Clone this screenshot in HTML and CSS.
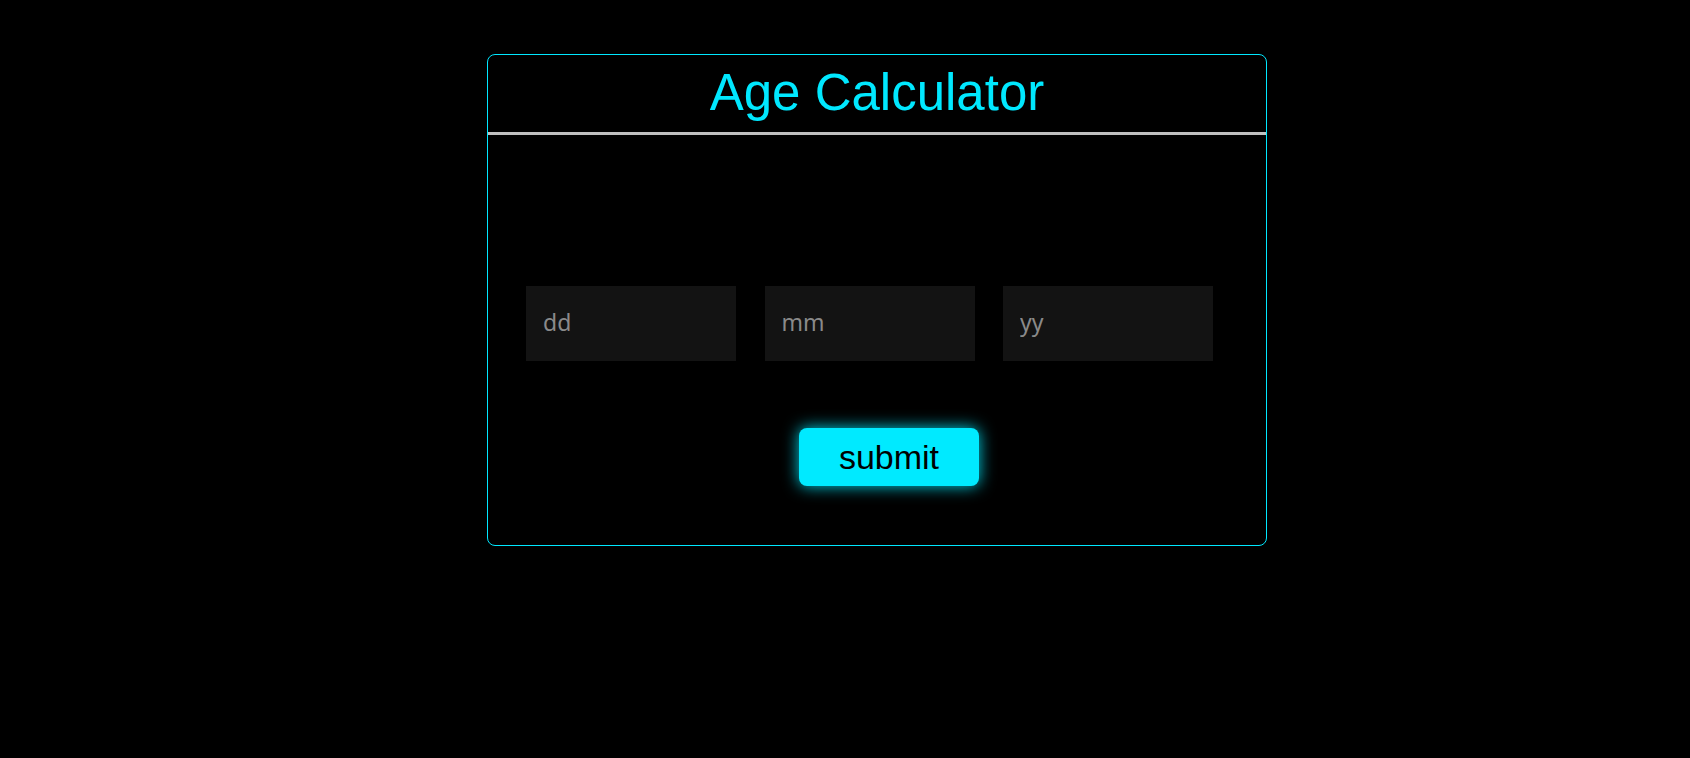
FILE: index.html
```html
<!DOCTYPE html>
<html>
<head>
<meta charset="utf-8">
<title>Age Calculator</title>
<link rel="stylesheet" href="styles.css">
</head>
<body>
<div class="card">
  <h1 class="title">Age Calculator</h1>
  <div class="divider"></div>
  <div class="content">
    <div class="inputs">
      <input class="field" type="text" placeholder="dd">
      <input class="field" type="text" placeholder="mm">
      <input class="field" type="text" placeholder="yy">
    </div>
    <button class="submit">submit</button>
  </div>
</div>
</body>
</html>
```
FILE: styles.css
```css
html, body {
  margin: 0;
  padding: 0;
  background: #000;
}
body {
  font-family: "Liberation Sans", Arial, sans-serif;
}
.card {
  box-sizing: border-box;
  margin: 54px 0 0 487px;
  width: 780px;
  height: 492px;
  border: 1px solid #00e8ff;
  border-radius: 8px;
  display: flex;
  flex-direction: column;
}
.title {
  margin: 0;
  padding: 12px 0 14px;
  font-size: 51px;
  line-height: 51px;
  font-weight: normal;
  color: #00e8ff;
  text-align: center;
}
.divider {
  height: 3px;
  background: #c0c0c0;
}
.content {
  display: flex;
  flex-direction: column;
  align-items: flex-start;
  padding: 151px 0 0 38px;
}
.inputs {
  display: flex;
  gap: 28.5px;
}
.field {
  box-sizing: border-box;
  width: 210px;
  height: 75px;
  border: none;
  outline: none;
  background: #131313;
  padding: 0 0 4px 17px;
  font-family: "Noto Sans", "Open Sans", sans-serif;
  font-size: 23px;
  color: #8a8a8a;
}
.field::placeholder {
  color: #8a8a8a;
}
.submit {
  margin: 67px 0 0 273px;
  width: 180px;
  height: 58px;
  border: none;
  border-radius: 8px;
  background: #00eaff;
  color: #000;
  font-family: "Liberation Sans", Arial, sans-serif;
  font-size: 34px;
  box-shadow: 0 0 16px rgba(0, 234, 255, 0.9);
  cursor: pointer;
}
```
